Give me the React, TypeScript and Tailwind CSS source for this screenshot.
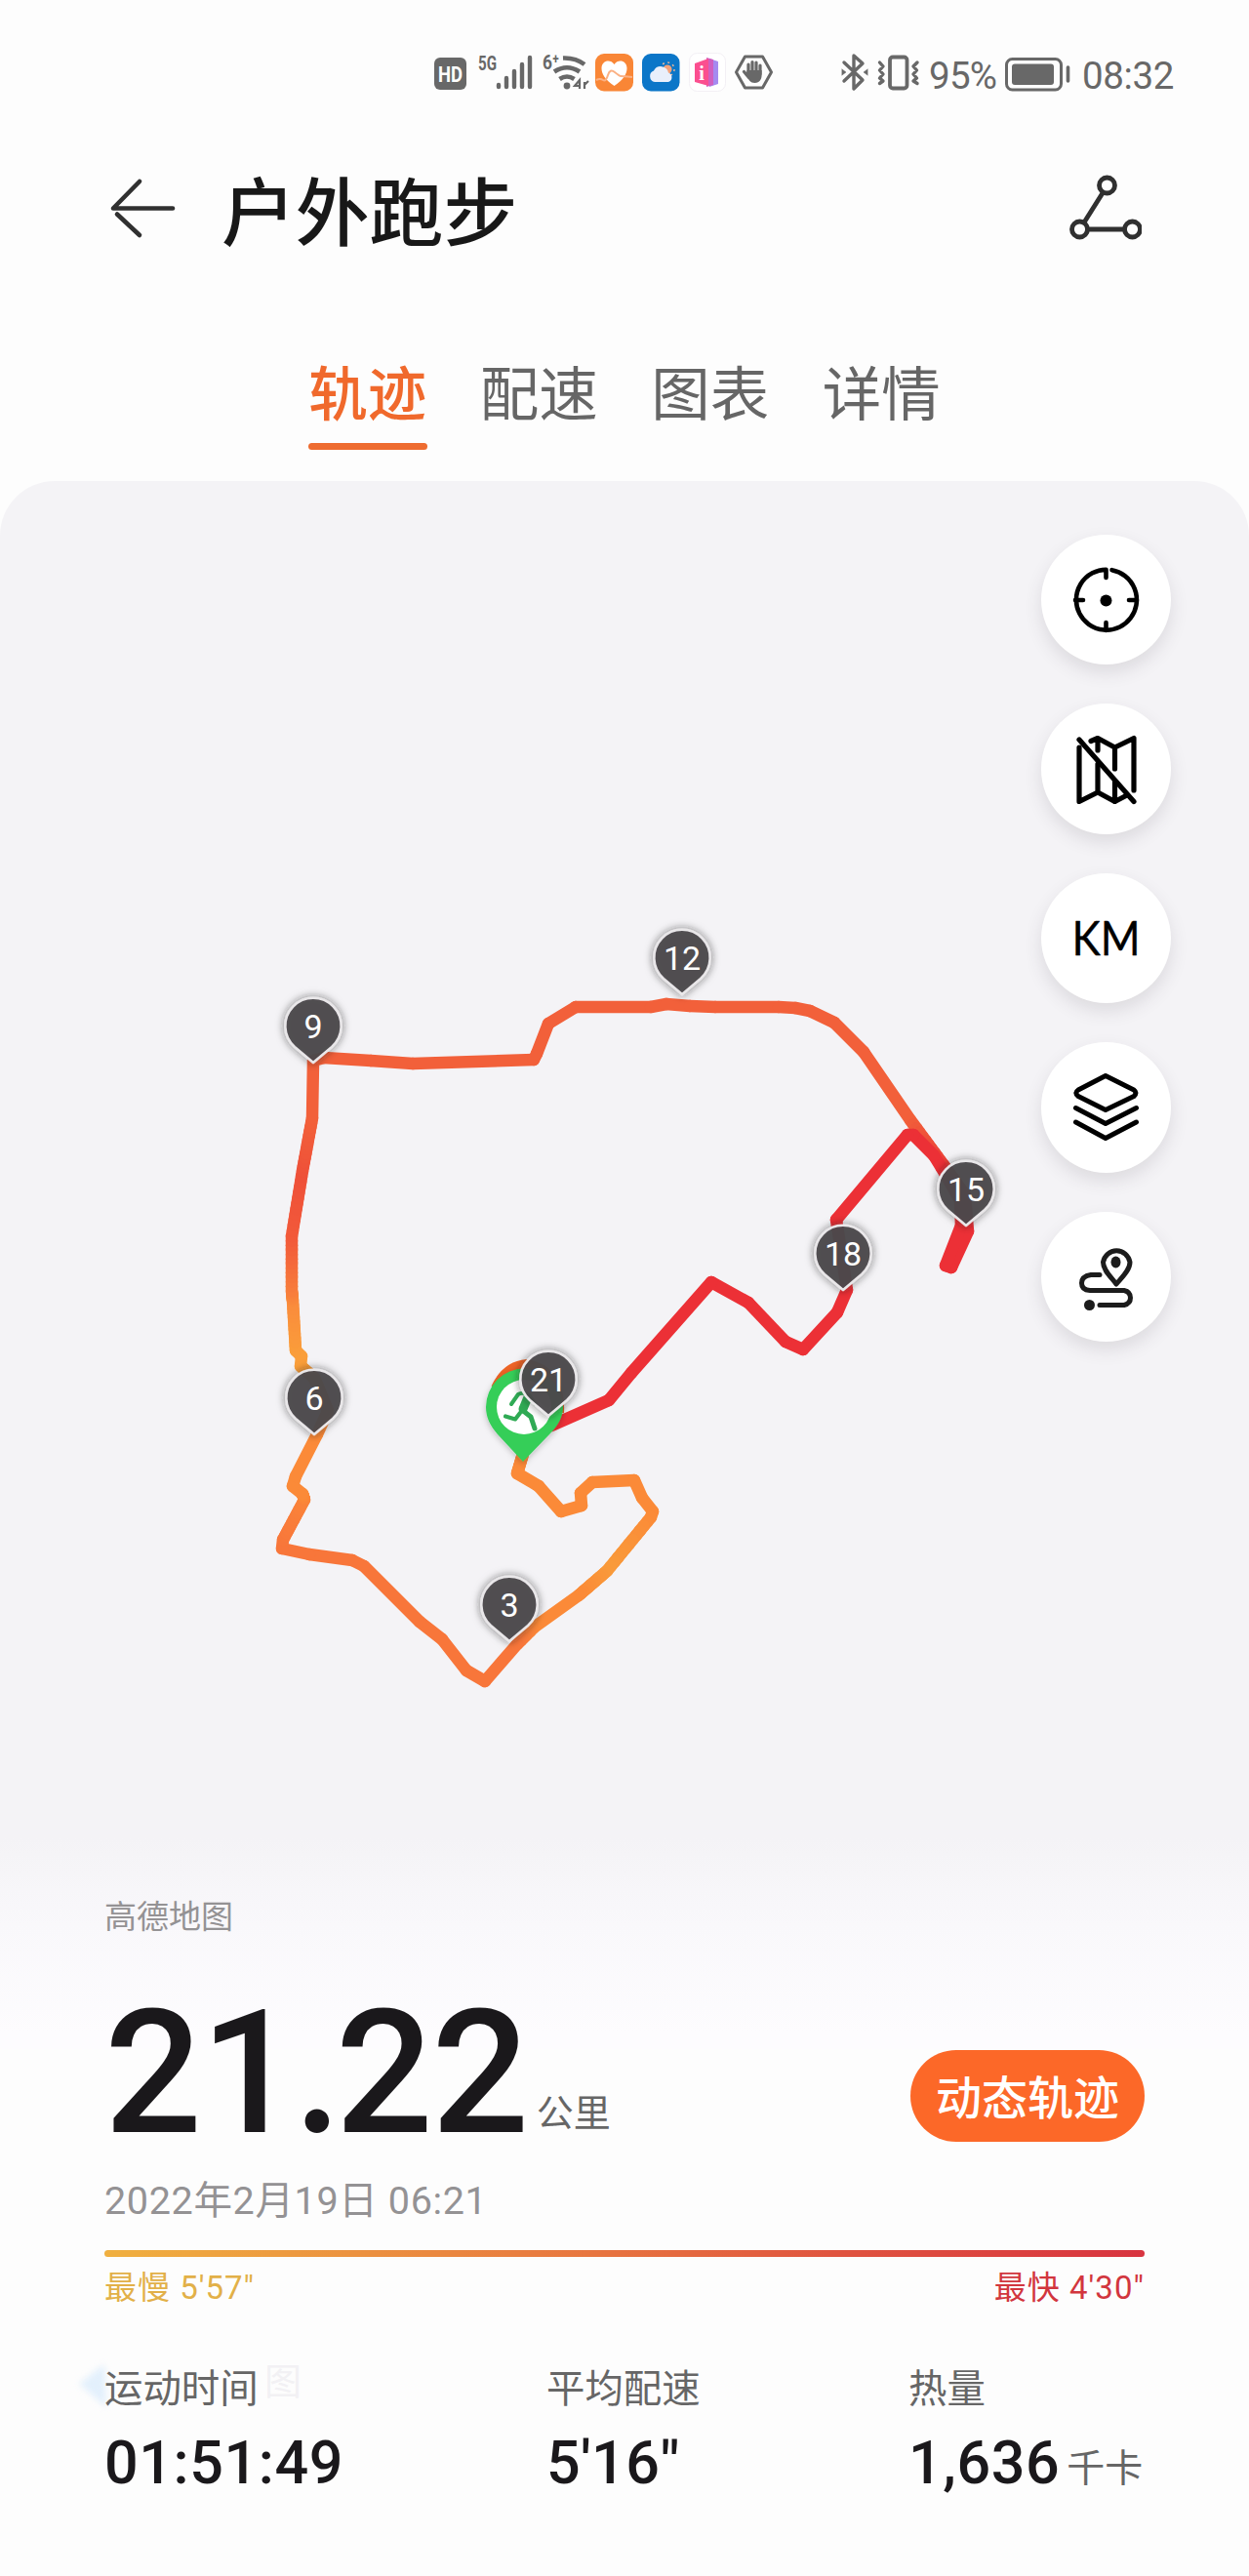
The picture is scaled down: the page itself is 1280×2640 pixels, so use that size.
import React from "react";

type RoutePoint = [number, number, string];

const ORANGE = "#fb8a38";
const DEEP = "#f8763a";
const AMBER = "#f99b3a";
const CORAL = "#f2603a";
const RED = "#ec3036";

const route: RoutePoint[] = [
  [536, 1490, "#f58238"],
  [530, 1510, ORANGE],
  [552, 1523, ORANGE],
  [575, 1549, ORANGE],
  [596, 1543, ORANGE],
  [595, 1530, ORANGE],
  [607, 1519, ORANGE],
  [650, 1517, ORANGE],
  [658, 1535, ORANGE],
  [669, 1549, ORANGE],
  [667, 1555, ORANGE],
  [622, 1610, AMBER],
  [593, 1635, ORANGE],
  [547, 1668, ORANGE],
  [530, 1685, DEEP],
  [497, 1723, DEEP],
  [478, 1712, DEEP],
  [453, 1680, DEEP],
  [430, 1662, DEEP],
  [373, 1605, DEEP],
  [361, 1599, DEEP],
  [317, 1593, DEEP],
  [289, 1587, DEEP],
  [290, 1578, DEEP],
  [312, 1537, "#fa823a"],
  [310, 1531, ORANGE],
  [300, 1523, ORANGE],
  [303, 1513, ORANGE],
  [325, 1470, ORANGE],
  [336, 1446, ORANGE],
  [322, 1412, AMBER],
  [308, 1400, "#fa9e3a"],
  [309, 1390, "#fa9e3a"],
  [303, 1384, "#fa9e3a"],
  [300, 1333, "#fa8c3c"],
  [299, 1323, "#f8803c"],
  [299, 1267, "#f25a3a"],
  [310, 1200, "#ee5039"],
  [320, 1146, CORAL],
  [321, 1087, CORAL],
  [332, 1084, CORAL],
  [380, 1087, CORAL],
  [423, 1090, CORAL],
  [547, 1086, CORAL],
  [550, 1080, CORAL],
  [562, 1049, CORAL],
  [590, 1032, CORAL],
  [667, 1032, CORAL],
  [683, 1029, CORAL],
  [707, 1031, CORAL],
  [733, 1032, CORAL],
  [798, 1032, CORAL],
  [815, 1033, CORAL],
  [830, 1036, CORAL],
  [855, 1048, CORAL],
  [885, 1078, CORAL],
  [933, 1148, CORAL],
  [970, 1198, "#ea3f38"],
  [989, 1225, RED],
  [992, 1262, RED],
  [975, 1299, RED],
  [969, 1297, RED],
  [985, 1256, RED],
  [984, 1230, RED],
  [965, 1197, RED],
  [957, 1184, RED],
  [936, 1163, RED],
  [930, 1163, RED],
  [857, 1250, RED],
  [868, 1322, RED],
  [858, 1345, RED],
  [823, 1383, RED],
  [805, 1375, RED],
  [767, 1335, RED],
  [729, 1314, RED],
  [647, 1407, RED],
  [624, 1435, RED],
  [565, 1461, RED],
];

const channels = (hex: string) => [1, 3, 5].map((i) => parseInt(hex.slice(i, i + 2), 16));

const mix = (a: string, b: string, t: number) => {
  const ca = channels(a);
  const cb = channels(b);
  return `rgb(${ca.map((v, i) => Math.round(v + (cb[i] - v) * t)).join(",")})`;
};

function Route() {
  const parts: React.ReactNode[] = [];
  for (let i = 0; i < route.length - 1; i++) {
    const [x1, y1, c1] = route[i];
    const [x2, y2, c2] = route[i + 1];
    const n = c1 === c2 ? 1 : 12;
    for (let k = 0; k < n; k++) {
      const a = k / n;
      const b = (k + 1) / n;
      parts.push(
        <line
          key={`${i}-${k}`}
          x1={x1 + (x2 - x1) * a}
          y1={y1 + (y2 - y1) * a}
          x2={x1 + (x2 - x1) * b}
          y2={y1 + (y2 - y1) * b}
          stroke={mix(c1, c2, (a + b) / 2)}
        />,
      );
    }
  }
  return (
    <g strokeWidth="12.5" strokeLinecap="round">
      {parts}
    </g>
  );
}

function KmPin({ x, y, label }: { x: number; y: number; label: string }) {
  return (
    <g transform={`translate(${x} ${y})`}>
      <path
        d="M0 0L-19 -16A28.700 28.700 0 1 1 19 -16Z"
        fill="#4b484c"
        fillOpacity="0.93"
        stroke="#e9e7e9"
        strokeWidth="2.6"
        strokeLinejoin="round"
        filter="url(#pinShadow)"
      />
      <text y="-25" textAnchor="middle" fill="#fff" fontSize="34" className="font-['Roboto']">
        {label}
      </text>
    </g>
  );
}

function TrackMap() {
  return (
    <svg className="block h-[1607px] w-[1280px]" viewBox="0 493 1280 1607">
      <defs>
        <filter id="pinShadow" x="-40%" y="-40%" width="180%" height="180%">
          <feDropShadow dx="0" dy="0" stdDeviation="4" floodColor="#222" floodOpacity="0.6" />
        </filter>
        <filter id="softShadow" x="-40%" y="-40%" width="180%" height="180%">
          <feDropShadow dx="0" dy="2" stdDeviation="3" floodColor="#222" floodOpacity="0.25" />
        </filter>
      </defs>
      <Route />
      <path
        d="M509 1423 Q519 1401 540 1399 Q574 1406 572 1448"
        fill="none"
        stroke="#ee6426"
        strokeWidth="12"
      />
      <path
        d="M536 1498 L510 1470 C502 1461 498 1452 498 1442 A39 39 0 0 1 577 1442 C577 1452 572 1461 564 1469 Z"
        fill="#34ce58"
        filter="url(#softShadow)"
      />
      <circle cx="537" cy="1442" r="28" fill="#fff" />
      <g fill="none" stroke="#2faa54" strokeLinecap="round" strokeLinejoin="round">
        <path d="M524 1439l7-10q5-3 11 1l7 9" strokeWidth="4" />
        <path d="M541 1432l-5 12" strokeWidth="9" />
        <path d="M535 1445l9 7 4 12" strokeWidth="5" />
        <path d="M533 1448l-5 6.500-10-3" strokeWidth="4.200" />
      </g>
      <KmPin x={522} y={1682} label="3" />
      <KmPin x={322} y={1470} label="6" />
      <KmPin x={321} y={1089} label="9" />
      <KmPin x={699} y={1019} label="12" />
      <KmPin x={990} y={1256} label="15" />
      <KmPin x={864} y={1322} label="18" />
      <KmPin x={562} y={1451} label="21" />
    </svg>
  );
}

function StatusBar() {
  return (
    <div className="flex h-[150px] items-center pl-[440px] text-[#686868]">
      <svg className="h-[50px] w-[360px]" viewBox="440 50 360 50">
        <rect x="445" y="59" width="33" height="33" rx="6" fill="#686868" />
        <text x="461.5" y="84" textAnchor="middle" fill="#fff" fontSize="22" fontWeight="700" textLength="25" lengthAdjust="spacingAndGlyphs" className="font-['Roboto']">HD</text>
        <text x="490" y="72" fill="#686868" fontSize="21" fontWeight="700" textLength="19" lengthAdjust="spacingAndGlyphs" className="font-['Roboto']">5G</text>
        <path d="M511 87v2M519 80v9M527 73v16M535 66v23M543 59v30" stroke="#686868" strokeWidth="4.4" strokeLinecap="round" />
        <text x="556" y="71" fill="#686868" fontSize="21" fontWeight="700" textLength="17" lengthAdjust="spacingAndGlyphs" className="font-['Roboto']">6⁺</text>
        <g fill="none" stroke="#686868" strokeWidth="4.6">
          <path d="M577 59.500Q590 59 599 66" />
          <path d="M568 73.500Q581 65 594 73.500" />
          <path d="M573.500 81Q581 76 588.500 81" />
        </g>
        <circle cx="581" cy="88" r="3.400" fill="#686868" />
        <path d="M594 91V82l-5 6h6M599 84v7M603 83l-4 4" fill="none" stroke="#686868" strokeWidth="2.200" />
        <rect x="610" y="55" width="39" height="38.500" rx="9" fill="#f98636" />
        <path d="M629.500 88c-9-6-13-12-13-18 0-8 9-10 13-4 4-6 13-4 13 4 0 6-4 12-13 18Z" fill="#fff" />
        <path d="M611 82q4-2 7 0t5-5 7-3 6 4 12 1" fill="none" stroke="#fbb184" strokeWidth="2" />
        <rect x="658" y="55" width="38.500" height="38.500" rx="9" fill="#0b76c8" />
        <circle cx="684" cy="71" r="4.500" fill="#f4a27a" />
        <circle cx="684" cy="71" r="7" fill="none" stroke="#e8b79a" strokeWidth="1.500" strokeDasharray="2 3.500" />
        <path d="M671 84a6 6 0 0 1-1-11.500 8 8 0 0 1 15 2 5 5 0 0 1 0 9.500Z" fill="#e9effb" />
        <rect x="706.500" y="54.500" width="37" height="39" rx="8" fill="#fff" stroke="#f3f0f5" />
        <path d="M727 60l9 3v23l-9 3Z" fill="#a58af0" />
        <path d="M724 59l7 2v26l-7 2Z" fill="#d05fc0" />
        <path d="M712 65l14-5v28l-14-4Z" fill="#fb4f8f" />
        <text x="719" y="82" textAnchor="middle" fill="#fff" fontSize="20" fontWeight="700" className="font-['Liberation_Serif']">i</text>
        <path d="M763.500 58h18l9 16-9 16h-18l-9-16Z" fill="none" stroke="#686868" strokeWidth="3" strokeLinejoin="round" />
        <path d="M767 75V66M771 74V63.500M775 74V64M779 76V67M762.500 73.500l5 6" stroke="#686868" strokeWidth="3.200" strokeLinecap="round" />
        <path d="M765.400 72h15.200v5c0 4-2 8-7 8s-6-3-8.200-7Z" fill="#686868" />
      </svg>
      <svg className="ml-[60px] h-[50px] w-[86px]" viewBox="860 50 86 50" fill="none" stroke="#686868" strokeLinecap="round" strokeLinejoin="round">
        <path d="M865 64l19 18-9 9V57l9 8-19 18" strokeWidth="3.400" />
        <path d="M863 71l4 3-4 3ZM889 71l-4 3 4 3Z" fill="#686868" strokeWidth="0.500" />
        <rect x="912" y="58.500" width="17.500" height="32" rx="3" strokeWidth="3.800" />
        <path d="M901.500 64l3.500 4-3.500 4 3.500 4-3.500 4 3.500 3-3.500 2.500M940 64l-4 4 3.500 4-3.500 4 3.500 4-3.500 3 4 2.500" strokeWidth="3.400" />
      </svg>
      <span className="ml-[6px] w-[72px] whitespace-nowrap pt-[6px] font-['Roboto'] text-[38.500px] leading-none tracking-[-0.700px]">95%</span>
      <svg className="ml-[6px] mt-[1px] h-[36px] w-[67px]" viewBox="1030 57 67 36" fill="none" stroke="#686868">
        <rect x="1031.500" y="59.500" width="56" height="31.500" rx="6" strokeWidth="3" />
        <rect x="1037" y="64.500" width="43" height="21.500" rx="3" fill="#686868" stroke="none" />
        <path d="M1094.500 68v14" strokeWidth="3.600" strokeLinecap="round" />
      </svg>
      <span className="ml-[12px] whitespace-nowrap pt-[6px] font-['Roboto'] text-[38.500px] leading-none tracking-[-0.400px]">08:32</span>
    </div>
  );
}

function Header() {
  return (
    <header className="flex h-[126px] items-center pl-[112px] pr-[110px]">
      <svg className="h-[66px] w-[68px]" viewBox="112 180 68 66" fill="none" stroke="#303030" strokeWidth="4.600" strokeLinecap="round" strokeLinejoin="round">
        <path d="M177 213.500H116L143 186M120 219.500L143 241" />
      </svg>
      <h1 className="ml-[47px] pt-[15px] text-[75.800px] font-medium leading-none text-[#181818]">户外跑步</h1>
      <svg className="ml-auto h-[70px] w-[76px]" viewBox="1094 178 76 70" fill="none" stroke="#303030" strokeWidth="4.800">
        <circle cx="1134.500" cy="190" r="8" />
        <circle cx="1106.500" cy="235" r="8" />
        <circle cx="1160.500" cy="235" r="8" />
        <path d="M1130.500 197L1111 228M1115 235h37" />
      </svg>
    </header>
  );
}

const tabs = ["轨迹", "配速", "图表", "详情"];

function Tabs() {
  return (
    <nav className="flex h-[217px] justify-center gap-[53.500px] pt-[100px]">
      {tabs.map((tab, i) => (
        <div key={tab} className="flex w-[122px] flex-col items-center">
          <span className={i === 0 ? "text-[60.500px] font-medium leading-[60px] text-[#f0692c]" : "text-[60.500px] leading-[60px] text-[#666]"}>{tab}</span>
          {i === 0 && <span className="mt-[18px] h-[7px] w-full rounded-full bg-[#ee6c30]" />}
        </div>
      ))}
    </nav>
  );
}

const mapTools = [
  <g key="locate">
    <path d="M72.500 36.200A31 31 0 1 1 66.500 35.700V44" />
    <path d="M66.500 98V90M35 67H43M98 67H90" />
    <circle cx="66.500" cy="67.500" r="6" fill="#000" stroke="none" />
  </g>,
  <g key="map-off" strokeWidth="5.200">
    <path d="M39 45V100.500L58 91 75.500 100.500 86 95M58 62V91M75.500 79V100.500M51 38.500L58 35.500 75.500 45 95 35.500V89M58 36V48M75.500 46V67" />
    <path d="M39 37L95 100.500" />
  </g>,
  <text key="km" x="31.500" y="84" fill="#000" strokeWidth="0.400" fontSize="48" fontWeight="400" textLength="70" lengthAdjust="spacingAndGlyphs" className="font-['Lato']">
    KM
  </text>,
  <g key="layers" strokeWidth="5">
    <path d="M66 34.500L95 49Q99 52 95 55.500L66 69.500 38 55.500Q33.500 52 38 49Z" />
    <path d="M35.500 67.500L66 83.500 97.500 67.500M35.500 82L66 98.500 97.500 82" />
  </g>,
  <g key="route" stroke="#1c1c1c" strokeWidth="5">
    <path d="M77 74C72 67 63.500 60 63.500 51.500A14 14.500 0 0 1 91 51.500C91 60 82 68 77 74Z" />
    <path d="M60 64.500H51Q41.500 66 41.500 73T50 80.500H85Q91.500 82 91.500 88T85 95.500H60" />
    <ellipse cx="76.500" cy="51.500" rx="5" ry="6" fill="#1c1c1c" stroke="none" />
    <circle cx="49.500" cy="95.500" r="5.500" fill="#1c1c1c" stroke="none" />
  </g>,
];

function MapTools() {
  return (
    <div className="absolute right-[80px] top-[55px] flex flex-col gap-[40px]">
      {mapTools.map((icon, i) => (
        <button key={i} className="size-[133.4px] rounded-full bg-white shadow-[0_8px_18px_rgba(60,55,70,0.13)]">
          <svg className="size-full" viewBox="0 0 133.4 133.4" fill="none" stroke="#000" strokeWidth="4.600" strokeLinecap="round" strokeLinejoin="round">
            {icon}
          </svg>
        </button>
      ))}
    </div>
  );
}

function Stat({ label, value, unit }: { label: string; value: string; unit?: string }) {
  return (
    <div>
      <div className="text-[39.400px] leading-[48px] text-[#666]">{label}</div>
      <div className="mt-[16px] flex items-baseline whitespace-nowrap leading-[70px]">
        <span className="font-['Roboto'] text-[61px] font-medium tracking-[0.600px] text-[#1a181b]">{value}</span>
        {unit && <span className="relative -top-[2px] ml-[7px] text-[39px] text-[#666]">{unit}</span>}
      </div>
    </div>
  );
}

export default function App() {
  return (
    <div className="relative h-[2640px] w-[1280px] overflow-hidden bg-[#fdfdfd] font-['Roboto','Noto_Sans_CJK_SC',sans-serif]">
      <StatusBar />
      <Header />
      <Tabs />
      <section className="relative h-[1607px] rounded-t-[56px] bg-[linear-gradient(to_bottom,#f4f3f6_0,#f4f3f6_1390px,#f9f8fb_1480px,#fdfcfe_1590px)]">
        <TrackMap />
        <MapTools />
        <div className="absolute left-[107px] top-[1455px] text-[33px] leading-[33px] text-[#949294]">高德地图</div>
      </section>
      <section className="-mt-[67px] px-[107px]">
        <div className="relative flex h-[171px] items-baseline whitespace-nowrap">
          <span className="font-['Roboto'] text-[176px] font-medium leading-[167px] tracking-[-1.500px] text-[#1a181b]">
            21<span className="font-['Lato'] font-semibold tracking-[-2px]">.</span>22
          </span>
          <span className="relative -top-[6px] ml-[9px] text-[38px] leading-none text-[#666]">公里</span>
          <button className="absolute right-0 top-[68px] h-[94px] w-[240px] rounded-full bg-[#fc6828] pt-[4px] text-[47px] font-medium leading-none text-white">动态轨迹</button>
        </div>
        <div className="mt-[28px] text-[39.500px] leading-[48px] tracking-[0.650px] text-[#949294]">2022年2月19日 06:21</div>
        <div className="mt-[26px] h-[7px] rounded-full bg-[linear-gradient(to_right,#f0b040,#e87840_45%,#e05540_70%,#d83440)]" />
        <div className="mt-[12px] flex justify-between text-[33px] leading-[40px] tracking-[1px]">
          <span className="text-[#e2b048]">最慢 5'57"</span>
          <span className="text-[#d2363e]">最快 4'30"</span>
        </div>
        <div className="relative mt-[60px] grid grid-cols-[453px_371px_1fr]">
          <svg className="absolute -left-[32px] -top-[14px] h-[70px] w-[250px]" viewBox="0 0 250 70">
            <path d="M6 32L32 12 34 56Z" fill="#e3f0fc" className="blur-[3px]" />
            <text x="196" y="43" fontSize="38" fill="#f2f1f4" className="font-['Noto_Sans_CJK_SC']">图</text>
          </svg>
          <div className="relative"><Stat label="运动时间" value="01:51:49" /></div>
          <Stat label="平均配速" value={"5'16\""} />
          <Stat label="热量" value="1,636" unit="千卡" />
        </div>
      </section>
    </div>
  );
}
